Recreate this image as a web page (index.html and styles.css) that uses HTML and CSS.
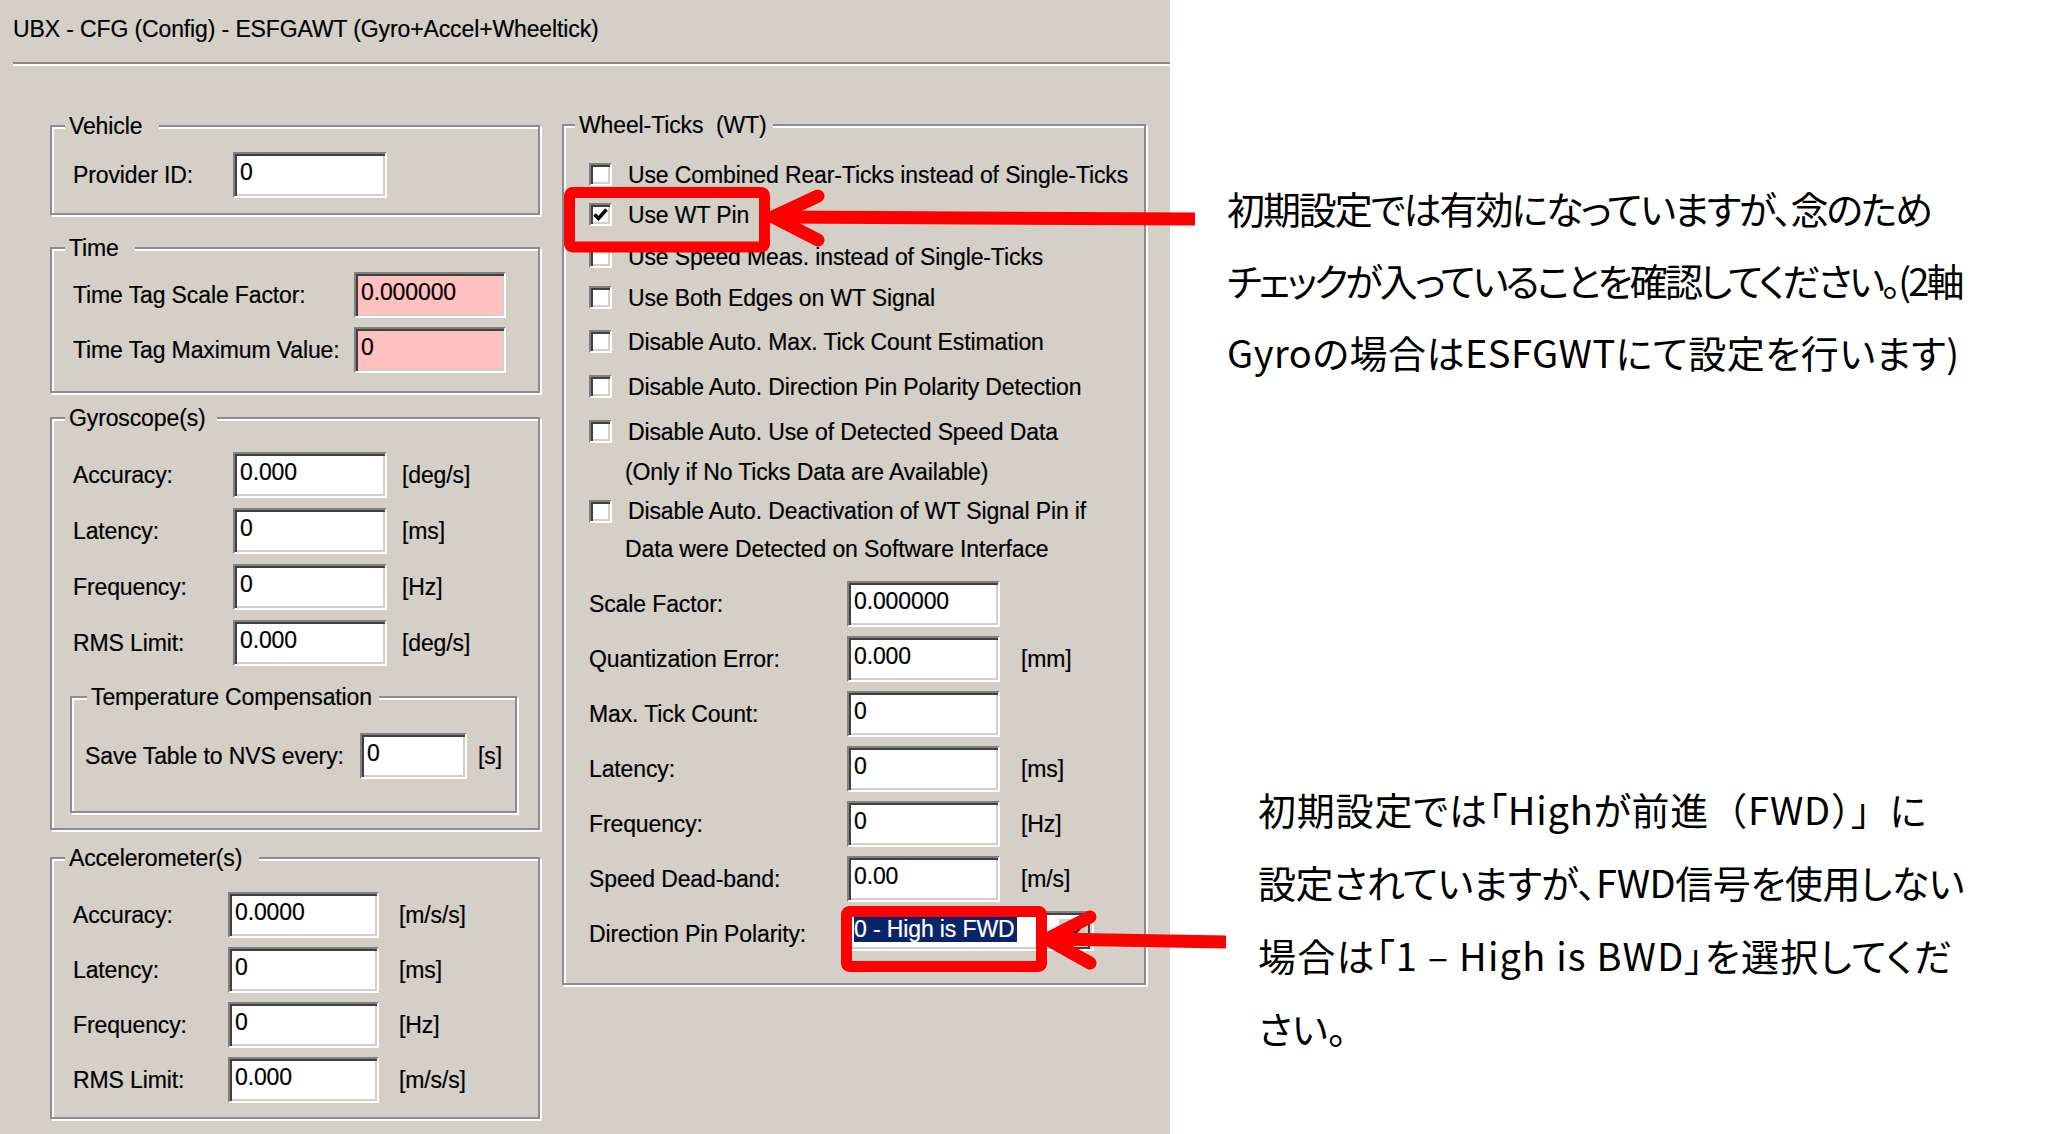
FILE: index.html
```html
<!DOCTYPE html>
<html lang="ja">
<head>
<meta charset="utf-8">
<title>ESFGAWT</title>
<link rel="stylesheet" href="styles.css">
</head>
<body>
<div class="page">
  <section class="dialog">
    <div class="title">UBX - CFG (Config) - ESFGAWT (Gyro+Accel+Wheeltick)</div>
    <div class="sep"></div>
    <div class="cols">
      <div class="col-left">
        <div class="gb gb-vehicle">
          <div class="gb-title">Vehicle</div>
          <div class="row"><span class="lbl">Provider ID:</span><span class="field">0</span></div>
        </div>
        <div class="gb gb-time">
          <div class="gb-title">Time</div>
          <div class="row"><span class="lbl">Time Tag Scale Factor:</span><span class="field pink">0.000000</span></div>
          <div class="row"><span class="lbl">Time Tag Maximum Value:</span><span class="field pink">0</span></div>
        </div>
        <div class="gb gb-gyro">
          <div class="gb-title">Gyroscope(s)</div>
          <div class="row"><span class="lbl">Accuracy:</span><span class="field">0.000</span><span class="unit">[deg/s]</span></div>
          <div class="row"><span class="lbl">Latency:</span><span class="field">0</span><span class="unit">[ms]</span></div>
          <div class="row"><span class="lbl">Frequency:</span><span class="field">0</span><span class="unit">[Hz]</span></div>
          <div class="row"><span class="lbl">RMS Limit:</span><span class="field">0.000</span><span class="unit">[deg/s]</span></div>
          <div class="gb gb-temp">
            <div class="gb-title">Temperature Compensation</div>
            <div class="row"><span class="lbl">Save Table to NVS every:</span><span class="field">0</span><span class="unit">[s]</span></div>
          </div>
        </div>
        <div class="gb gb-accel">
          <div class="gb-title">Accelerometer(s)</div>
          <div class="row"><span class="lbl">Accuracy:</span><span class="field">0.0000</span><span class="unit">[m/s/s]</span></div>
          <div class="row"><span class="lbl">Latency:</span><span class="field">0</span><span class="unit">[ms]</span></div>
          <div class="row"><span class="lbl">Frequency:</span><span class="field">0</span><span class="unit">[Hz]</span></div>
          <div class="row"><span class="lbl">RMS Limit:</span><span class="field">0.000</span><span class="unit">[m/s/s]</span></div>
        </div>
      </div>
      <div class="col-right">
        <div class="gb gb-wt">
          <div class="gb-title">Wheel-Ticks&nbsp; (WT)</div>
          <div class="chk-row"><span class="cb"></span><span class="chk-lbl">Use Combined Rear-Ticks instead of Single-Ticks</span></div>
          <div class="chk-row"><span class="cb"><svg class="tick" viewBox="0 0 19 19" width="19" height="19"><path d="M3.5 9.5 L7.5 13.5 L15.5 4.5" fill="none" stroke="#000" stroke-width="3.4"/></svg></span><span class="chk-lbl">Use WT Pin</span></div>
          <div class="chk-row"><span class="cb"></span><span class="chk-lbl">Use Speed Meas. instead of Single-Ticks</span></div>
          <div class="chk-row"><span class="cb"></span><span class="chk-lbl">Use Both Edges on WT Signal</span></div>
          <div class="chk-row"><span class="cb"></span><span class="chk-lbl">Disable Auto. Max. Tick Count Estimation</span></div>
          <div class="chk-row"><span class="cb"></span><span class="chk-lbl">Disable Auto. Direction Pin Polarity Detection</span></div>
          <div class="chk-row"><span class="cb"></span><span class="chk-lbl">Disable Auto. Use of Detected Speed Data<br><span class="sub">(Only if No Ticks Data are Available)</span></span></div>
          <div class="chk-row"><span class="cb"></span><span class="chk-lbl">Disable Auto. Deactivation of WT Signal Pin if<br><span class="sub">Data were Detected on Software Interface</span></span></div>
          <div class="row wt-row"><span class="lbl">Scale Factor:</span><span class="field">0.000000</span></div>
          <div class="row wt-row"><span class="lbl">Quantization Error:</span><span class="field">0.000</span><span class="unit">[mm]</span></div>
          <div class="row wt-row"><span class="lbl">Max. Tick Count:</span><span class="field">0</span></div>
          <div class="row wt-row"><span class="lbl">Latency:</span><span class="field">0</span><span class="unit">[ms]</span></div>
          <div class="row wt-row"><span class="lbl">Frequency:</span><span class="field">0</span><span class="unit">[Hz]</span></div>
          <div class="row wt-row"><span class="lbl">Speed Dead-band:</span><span class="field">0.00</span><span class="unit">[m/s]</span></div>
          <div class="row wt-row combo-row"><span class="lbl">Direction Pin Polarity:</span>
            <span class="combo"><span class="combo-sel">0 - High is FWD</span><span class="combo-btn"><svg viewBox="0 0 14 8" width="14" height="8"><path d="M0 0 H14 L7 7 Z" fill="#000"/></svg></span></span>
          </div>
        </div>
      </div>
    </div>
  </section>
  <section class="notes">
    <p class="note note1"><span class="ln n1a">初期設定では有効になっていますが、念のため</span><br><span class="ln n1b">チェックが入っていることを確認してください。(2軸</span><br><span class="ln n1c">Gyroの場合はESFGWTにて設定を行います)</span></p>
    <p class="note note2"><span class="ln n2a">初期設定では「Highが前進<span class="fw">（</span>FWD<span class="fw">）」</span>に</span><br><span class="ln n2b">設定されていますが、FWD信号を使用しない</span><br><span class="ln n2c">場合は「1 – High is BWD」を選択してくだ</span><br><span class="ln">さい。</span></p>
  </section>
  <svg class="overlay" width="2048" height="1134" viewBox="0 0 2048 1134">
    <g fill="none" stroke="#ff0000" stroke-width="11" stroke-linejoin="round" stroke-linecap="round">
      <rect x="569.5" y="192.5" width="195" height="54.5" rx="3"/>
      <path d="M818 196 L773 217 L818 240" stroke-width="13"/>
      <line x1="778" y1="217" x2="1195" y2="219" stroke-width="13" stroke-linecap="butt"/>
      <rect x="846.5" y="911.5" width="195" height="55" rx="3"/>
      <path d="M1090 917 L1047 939 L1090 963" stroke-width="13"/>
      <line x1="1052" y1="939" x2="1226" y2="942" stroke-width="13" stroke-linecap="butt"/>
    </g>
  </svg>
</div>
</body>
</html>
```

FILE: styles.css
```css
* { box-sizing: border-box; }
body { margin: 0; background: #fff; }
.page { position: relative; width: 2048px; height: 1134px; display: flex; overflow: hidden; }

.dialog {
  flex: none; width: 1170px; height: 1134px; background: #d4d0c8; color: #000;
  font-family: "Liberation Sans", Arial, sans-serif; font-size: 23px; letter-spacing: -0.12px;
  -webkit-text-stroke: 0.2px #000;
}
.title { padding: 12px 0 0 13px; line-height: 34px; white-space: nowrap; }
.sep { margin: 16px 0 0 13px; border-top: 2px solid #8a8a8a; border-bottom: 2px solid #fff; }
.cols { display: flex; }
.col-left { margin-left: 50px; width: 490px; display: flex; flex-direction: column; }
.col-right { margin-left: 22px; width: 584px; }

.gb {
  border: 2px solid #8c8c8c;
  box-shadow: inset 2px 2px 0 #fff, 2px 2px 0 #fff;
  display: flex; flex-direction: column; align-items: flex-start;
}
.gb-title { margin: -15px 0 0 13px; padding: 0 6px 0 4px; line-height: 28px; background: #d4d0c8; white-space: nowrap; }

.row { display: flex; align-items: center; height: 46px; padding-left: 21px; flex: none; white-space: nowrap; }
.lbl { flex: none; }
.field {
  flex: none; display: block; width: 154px; height: 46px; background: #fff;
  border: 2px solid; border-color: #808080 #fff #fff #808080;
  box-shadow: inset 2px 2px 0 #404040, inset -2px -2px 0 #d4d0c8;
  padding: 5px 0 0 5px; line-height: 26px;
}
.field.pink { background: #ffc0c0; }
.unit { margin-left: 15px; }

.gb-vehicle { margin-top: 59px; height: 90px; }
.gb-vehicle .gb-title { padding-right: 17px; }
.gb-vehicle .row { margin-top: 12px; }
.gb-vehicle .lbl { width: 160px; }

.gb-time { margin-top: 32px; height: 146px; }
.gb-time .gb-title { padding-right: 16px; }
.gb-time .row { margin-top: 9px; }
.gb-time .gb-title + .row { margin-top: 10px; }
.gb-time .lbl { width: 281px; }
.gb-time .field { width: 152px; }

.gb-gyro { margin-top: 24px; height: 413px; }
.gb-gyro > .gb-title { padding-right: 11px; }
.gb-gyro > .row { margin-top: 10px; }
.gb-gyro > .gb-title + .row { margin-top: 20px; }
.gb-gyro > .row .lbl { width: 160px; }

.gb-temp { align-self: stretch; margin: 30px 21px 0 18px; height: 117px; }
.gb-temp .gb-title { margin-left: 15px; padding-right: 7px; }
.gb-temp .row { margin-top: 22px; padding-left: 13px; }
.gb-temp .lbl { width: 275px; }
.gb-temp .field { width: 107px; }
.gb-temp .unit { margin-left: 11px; }

.gb-accel { margin-top: 27px; height: 262px; }
.gb-accel .gb-title { padding-right: 17px; }
.gb-accel .row { margin-top: 9px; }
.gb-accel .gb-title + .row { margin-top: 20px; }
.gb-accel .lbl { width: 155px; }
.gb-accel .field { width: 151px; }
.gb-accel .unit { margin-left: 20px; }

.gb-wt { margin-top: 58px; height: 861px; }
.gb-wt .gb-title { margin-left: 11px; padding-right: 7px; }
.chk-row { display: flex; align-items: flex-start; padding-left: 25px; line-height: 40px; white-space: nowrap; }
.chk-row:nth-child(2) { margin-top: 16px; }
.chk-row:nth-child(4) { margin-top: 2px; }
.chk-row:nth-child(5) { margin-top: 1px; }
.chk-row:nth-child(6) { margin-top: 4px; }
.chk-row:nth-child(7) { margin-top: 5px; }
.chk-row:nth-child(8) { margin-top: 5px; }
.chk-row:nth-child(9) { line-height: 38px; }
.cb {
  flex: none; width: 23px; height: 23px; margin: 8px 16px 0 0; background: #fff;
  border: 2px solid; border-color: #808080 #fff #fff #808080;
  box-shadow: inset 2px 2px 0 #404040, inset -2px -2px 0 #d4d0c8;
}
.tick { display: block; margin: 0; }
.sub { margin-left: -3px; }

.wt-row { padding-left: 25px; margin-top: 9px; }
.chk-row + .wt-row { margin-top: 13px; }
.wt-row .lbl { width: 258px; }
.wt-row .field { width: 153px; }
.wt-row .unit { margin-left: 21px; }
.combo-row { height: 40px; }
.combo-row .lbl { padding-top: 7px; }
.combo {
  display: flex; align-items: flex-start; width: 247px; height: 40px; background: #fff;
  border: 2px solid; border-color: #808080 #fff #fff #808080;
  box-shadow: inset 2px 2px 0 #404040, inset -2px -2px 0 #d4d0c8;
  padding: 4px 2px 0 5px;
}
.combo-sel { background: #0a246a; color: #fff; -webkit-text-stroke: 0.2px #fff; line-height: 25px; height: 25px; padding: 0 2px 0 0; }
.combo-btn {
  margin-left: auto; width: 33px; height: 32px; background: #d4d0c8;
  border: 2px solid; border-color: #fff #404040 #404040 #fff;
  display: flex; align-items: center; justify-content: center;
}

.notes {
  flex: 1; padding-top: 172px; color: #000; white-space: nowrap;
  font-family: "Noto Sans CJK JP", "Noto Sans CJK SC", sans-serif; font-size: 38px;
  font-feature-settings: "palt";
}
.note { margin: 0; }
.note1 { margin-left: 57px; line-height: 72px; }
.note2 { margin: 384px 0 0 88px; line-height: 73px; }
.fw { font-feature-settings: normal; }
.n1a { letter-spacing: -2.1px; }
.n1b { letter-spacing: -2.85px; }
.n1c { letter-spacing: 0.5px; }
.n2a { letter-spacing: 0.8px; }
.n2b { letter-spacing: -0.45px; }
.n2c { letter-spacing: 1.2px; }

.overlay { position: absolute; left: 0; top: 0; pointer-events: none; }
```
